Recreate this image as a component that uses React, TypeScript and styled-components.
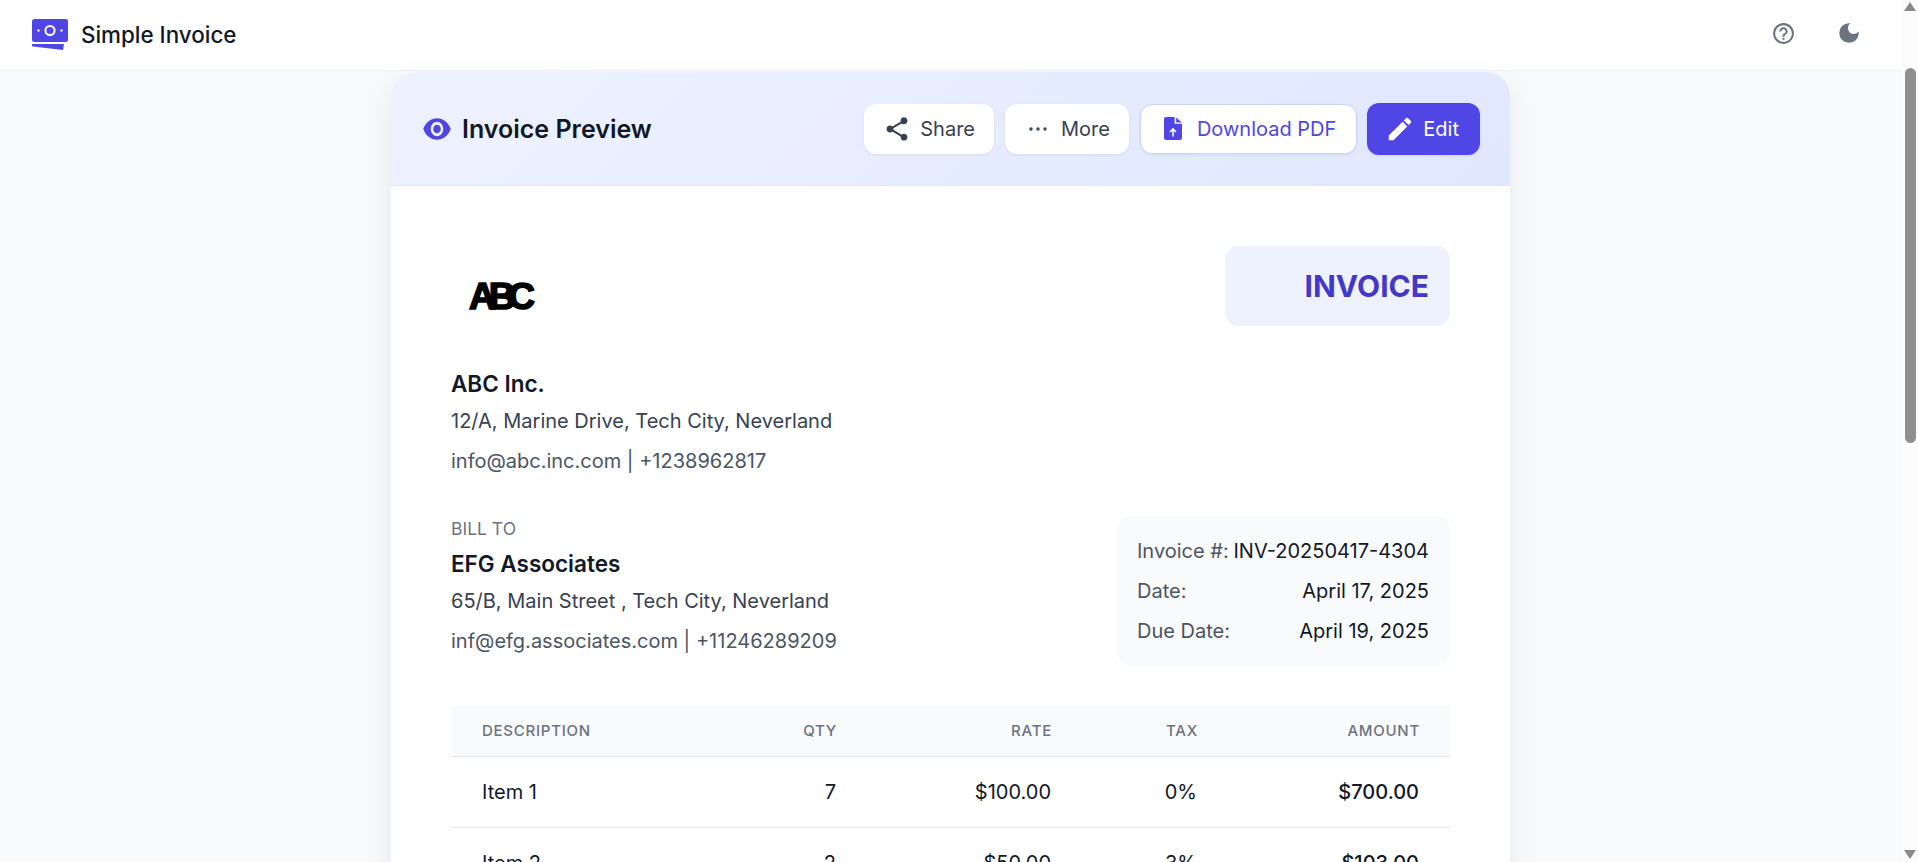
import { Ellipsis } from "lucide-react";
import { MdDarkMode, MdEdit, MdHelpOutline, MdShare, MdVisibility } from "react-icons/md";
import styled, { createGlobalStyle } from "styled-components";

const items = [
  { name: "Item 1", qty: "7", rate: "$100.00", tax: "0%", amount: "$700.00" },
  { name: "Item 2", qty: "2", rate: "$50.00", tax: "3%", amount: "$103.00" },
];

const metaRows = [
  ["Invoice #:", "INV-20250417-4304"],
  ["Date:", "April 17, 2025"],
  ["Due Date:", "April 19, 2025"],
];

const App = () => {
  return (
    <Shell>
      <GlobalStyle />
      <Page>
        <Nav>
          <Brand>
            <svg width="36" height="32" viewBox="0 0 36 32">
              <rect x="0" y="0" width="36" height="23" rx="2.5" fill="#4f46e5" />
              <circle cx="18" cy="11.5" r="4.6" fill="none" stroke="#fff" strokeWidth="2" />
              <circle cx="6.5" cy="11.5" r="1.2" fill="#fff" />
              <circle cx="29.5" cy="11.5" r="1.2" fill="#fff" />
              <path d="M0 25h32l-1 6L1 27.5 0 27z" fill="#4f46e5" />
            </svg>
            <BrandName>Simple Invoice</BrandName>
          </Brand>
          <NavIcons>
            <MdHelpOutline size={25} />
            <MdDarkMode size={26} />
          </NavIcons>
        </Nav>

        <Card>
          <CardHeader>
            <Title>
              <EyeIcon size={30} />
              Invoice Preview
            </Title>
            <Actions>
              <Button $tight>
                <ShareIcon size={28} />
                Share
              </Button>
              <Button $tight>
                <Ellipsis size={24} strokeWidth={1.4} />
                More
              </Button>
              <Button $variant="outline">
                <FileIcon width="18" height="23" viewBox="0 0 18 23">
                  <path d="M2 0h8.6v6.8H18V21a2 2 0 0 1-2 2H2a2 2 0 0 1-2-2V2a2 2 0 0 1 2-2z" fill="#4f46e5" />
                  <path d="M12.2.4 17.8 5.4h-5.6z" fill="#4f46e5" />
                  <path d="M9 19.5v-7M6 15l3-3 3 3" fill="none" stroke="#fff" strokeWidth="1.6" />
                </FileIcon>
                Download PDF
              </Button>
              <Button $variant="primary">
                <EditIcon size={30} />
                Edit
              </Button>
            </Actions>
          </CardHeader>

          <CardBody>
            <TopRow>
              <LogoBox>
                <LogoText>ABC</LogoText>
              </LogoBox>
              <InvoiceBadge>INVOICE</InvoiceBadge>
            </TopRow>

            <Company>
              <PartyName>ABC Inc.</PartyName>
              <Detail $dark>12/A, Marine Drive, Tech City, Neverland</Detail>
              <Detail>info@abc.inc.com | +1238962817</Detail>
            </Company>

            <BillRow>
              <div>
                <BillLabel>BILL TO</BillLabel>
                <PartyName $spaced>EFG Associates</PartyName>
                <Detail $dark>65/B, Main Street , Tech City, Neverland</Detail>
                <Detail>inf@efg.associates.com | +11246289209</Detail>
              </div>
              <MetaBox>
                {metaRows.map(([label, value]) => (
                  <MetaRow key={label}>
                    <MetaLabel>{label}</MetaLabel>
                    <MetaValue>{value}</MetaValue>
                  </MetaRow>
                ))}
              </MetaBox>
            </BillRow>

            <ItemsTable>
              <HeadRow>
                <HeadCell>Description</HeadCell>
                <HeadCell $right>Qty</HeadCell>
                <HeadCell $right>Rate</HeadCell>
                <HeadCell $right>Tax</HeadCell>
                <HeadCell $right>Amount</HeadCell>
              </HeadRow>
              {items.map((item) => (
                <ItemRow key={item.name}>
                  <ItemCell>{item.name}</ItemCell>
                  <ItemCell $right>{item.qty}</ItemCell>
                  <ItemCell $right>{item.rate}</ItemCell>
                  <ItemCell $right>{item.tax}</ItemCell>
                  <ItemCell $right $strong>
                    {item.amount}
                  </ItemCell>
                </ItemRow>
              ))}
            </ItemsTable>
          </CardBody>
        </Card>
      </Page>

      <ScrollTrack>
        <ArrowUp />
        <ScrollThumb />
        <ArrowDown />
      </ScrollTrack>
    </Shell>
  );
};

export default App;

const GlobalStyle = createGlobalStyle`
  html, body {
    margin: 0;
    height: 100%;
    overflow: hidden;
  }
  body {
    font-family: Inter, "Noto Sans", sans-serif;
    color: #111827;
  }
`;

const Shell = styled.div`
  display: flex;
  height: 100vh;
  overflow: hidden;
`;

const Page = styled.div`
  flex: 1;
  min-width: 0;
  background: #f9fafb;
  overflow: hidden;
`;

const Nav = styled.header`
  display: flex;
  justify-content: space-between;
  align-items: center;
  height: 71px;
  padding: 0 39px 0 32px;
  background: #fff;
  border-bottom: 1px solid #f0f1f4;
  box-sizing: border-box;
`;

const Brand = styled.div`
  display: flex;
  align-items: center;
  gap: 13px;
`;

const BrandName = styled.span`
  margin-bottom: 2px;
  font-size: 22.4px;
  font-weight: 500;
  color: #111827;
`;

const NavIcons = styled.div`
  display: flex;
  align-items: center;
  gap: 40px;
  margin-bottom: 4px;
  color: #6b7280;
`;

const Card = styled.main`
  width: 1119px;
  margin: 1px auto 40px;
  background: #fff;
  border-radius: 24px;
  box-shadow: 0 10px 30px rgba(17, 24, 39, 0.08);
  overflow: hidden;
`;

const CardHeader = styled.div`
  display: flex;
  justify-content: space-between;
  align-items: center;
  height: 114px;
  padding: 0 30px 0 31px;
  background: linear-gradient(135deg, #eef2ff, #e0e7ff);
  border-bottom: 1px solid #e0e7ff;
  box-sizing: border-box;
`;

const Title = styled.h2`
  display: flex;
  align-items: center;
  gap: 10px;
  margin: 0;
  font-size: 25px;
  font-weight: 600;
  color: #111827;
`;

const EyeIcon = styled(MdVisibility)`
  color: #4f46e5;
  transform: scaleY(1.15);
`;

const Actions = styled.div`
  display: flex;
  align-items: center;
  gap: 11px;
`;

const Button = styled.button<{ $variant?: "outline" | "primary"; $tight?: boolean }>`
  display: flex;
  align-items: center;
  gap: ${(p) => (p.$variant === "outline" ? "12px" : "11px")};
  height: ${(p) => (p.$variant === "primary" ? "52px" : "50px")};
  margin-left: ${(p) => (p.$variant === "primary" ? "-1px" : "0")};
  padding: 0 ${(p) => (p.$tight ? "18px" : "20px")} 0 20px;
  border: 1px solid ${(p) => (p.$variant === "outline" ? "#c7d2fe" : "transparent")};
  border-radius: 12px;
  background: ${(p) => (p.$variant === "primary" ? "#4f46e5" : "#fff")};
  color: ${(p) => (p.$variant === "primary" ? "#fff" : p.$variant === "outline" ? "#4f46e5" : "#374151")};
  box-shadow: 0 1px 3px rgba(17, 24, 39, 0.08);
  font-family: inherit;
  font-size: 20px;
  font-weight: 400;
  white-space: nowrap;
`;

const ShareIcon = styled(MdShare)`
  margin: 0 -2px;
`;

const EditIcon = styled(MdEdit)`
  margin: 0 -3px;
`;

const FileIcon = styled.svg`
  margin: 0 3px;
`;

const CardBody = styled.div`
  padding: 60px;
`;

const TopRow = styled.div`
  display: flex;
  justify-content: space-between;
  align-items: flex-start;
`;

const LogoBox = styled.div`
  display: flex;
  justify-content: center;
  align-items: center;
  width: 102px;
  height: 102px;
`;

const LogoText = styled.span`
  font-family: "Liberation Sans", sans-serif;
  font-size: 37px;
  font-weight: 700;
  letter-spacing: -7px;
  margin-right: 7px;
  -webkit-text-stroke: 1.6px #000;
  color: #000;
`;

const InvoiceBadge = styled.div`
  display: flex;
  justify-content: flex-end;
  align-items: center;
  width: 225px;
  height: 80px;
  padding: 0 21px;
  background: #eef2ff;
  border-radius: 14px;
  box-sizing: border-box;
  font-size: 30px;
  font-weight: 700;
  color: #4338ca;
`;

const Company = styled.div`
  margin-top: 21px;
`;

const PartyName = styled.div<{ $spaced?: boolean }>`
  margin-top: ${(p) => (p.$spaced ? "7px" : "0")};
  margin-bottom: 2px;
  font-size: 22.5px;
  line-height: 30px;
  font-weight: 600;
  color: #111827;
`;

const Detail = styled.div<{ $dark?: boolean }>`
  font-size: 20px;
  line-height: 40px;
  color: ${(p) => (p.$dark ? "#374151" : "#4b5563")};
`;

const BillRow = styled.div`
  display: flex;
  justify-content: space-between;
  align-items: flex-start;
  margin-top: 35px;
`;

const BillLabel = styled.div`
  font-size: 17.5px;
  line-height: 26px;
  color: #6b7280;
`;

const MetaBox = styled.div`
  display: flex;
  flex-direction: column;
  justify-content: center;
  width: 333px;
  height: 150px;
  padding: 0 21px 0 20px;
  background: #f9fafb;
  border-radius: 14px;
  box-sizing: border-box;
`;

const MetaRow = styled.div`
  display: flex;
  justify-content: space-between;
  gap: 4px;
  font-size: 20px;
  line-height: 40px;
  white-space: nowrap;
`;

const MetaLabel = styled.span`
  color: #4b5563;
`;

const MetaValue = styled.span`
  color: #111827;
`;

const ItemsTable = styled.div`
  margin-top: 40px;
`;

const HeadRow = styled.div`
  display: grid;
  grid-template-columns: 1fr 120px 215px 146px 223px;
  height: 51px;
  background: #f9fafb;
  border-bottom: 1px solid #e5e7eb;
  box-sizing: border-box;
`;

const ItemRow = styled(HeadRow)`
  height: 71px;
  background: #fff;
`;

const HeadCell = styled.div<{ $right?: boolean }>`
  display: flex;
  align-items: center;
  justify-content: ${(p) => (p.$right ? "flex-end" : "flex-start")};
  padding: 0 29px 2px 31px;
  font-size: 15px;
  font-weight: 500;
  letter-spacing: 0.05em;
  text-transform: uppercase;
  color: #6b7280;
  &:last-child {
    padding-right: 30px;
  }
`;

const ItemCell = styled.div<{ $right?: boolean; $strong?: boolean }>`
  display: flex;
  align-items: center;
  justify-content: ${(p) => (p.$right ? "flex-end" : "flex-start")};
  padding: 0 30px 0 31px;
  font-size: 20px;
  font-weight: ${(p) => (p.$strong ? 500 : 400)};
  color: #111827;
  &:last-child {
    padding-right: 31px;
  }
`;

const ScrollTrack = styled.div`
  display: flex;
  flex-direction: column;
  align-items: center;
  width: 17px;
  padding: 2px 0 2px 1px;
  background: #fcfcfd;
  box-sizing: border-box;
`;

const ArrowUp = styled.div`
  width: 0;
  height: 0;
  border-left: 6px solid transparent;
  border-right: 6px solid transparent;
  border-bottom: 9px solid #8a8a8a;
`;

const ArrowDown = styled.div`
  width: 0;
  height: 0;
  margin-top: auto;
  margin-bottom: 1px;
  border-left: 6px solid transparent;
  border-right: 6px solid transparent;
  border-top: 9px solid #8a8a8a;
`;

const ScrollThumb = styled.div`
  width: 11px;
  height: 375px;
  margin-top: 57px;
  border-radius: 6px;
  background: #8f8f8f;
`;
